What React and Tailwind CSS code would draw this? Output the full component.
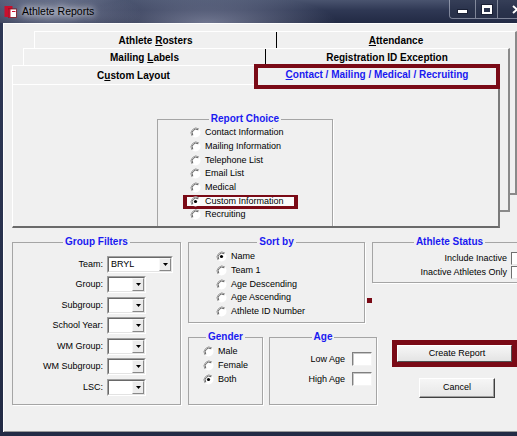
import React from 'react';

const legendCls = "mx-auto px-[2px] text-[10px] leading-[12px] font-bold text-[#1a1af0]";
const boxCls = "shrink-0 border border-[#a5a5a5] shadow-[1px_1px_0_#fff]";

function Radio({ checked }) {
  return (
    <svg width="11" height="11" viewBox="0 0 11 11" className="shrink-0">
      <circle cx="5.5" cy="5.5" r="5" fill="#fff" />
      <path d="M9 2A5 5 0 0 0 2 9" fill="none" stroke="#9a9a9a" strokeWidth="1" />
      <path d="M8.2 2.8A3.9 3.9 0 0 0 2.8 8.2" fill="none" stroke="#606060" strokeWidth="1" />
      {checked && <circle cx="5.5" cy="5.5" r="1.6" fill="#000" />}
    </svg>
  );
}

function RadioRow({ label, checked }) {
  return (
    <div className="flex h-[13.7px] items-center gap-[4px]">
      <Radio checked={checked} />
      <span className="text-[9px] leading-none text-black">{label}</span>
    </div>
  );
}

function Combo({ value, wide }) {
  return (
    <div className={`flex h-[17px] ${wide ? 'w-[66px]' : 'w-[39px]'} border border-t-[#a0a0a0] border-l-[#a0a0a0] border-r-white border-b-white`}>
      <div className="flex flex-1 border border-t-[#696969] border-l-[#696969] border-r-[#e3e3e3] border-b-[#e3e3e3] bg-white">
        <span className="flex-1 pl-[2px] text-[9px] leading-[13px] text-black">{value}</span>
        <div className="flex w-[12px] items-center justify-center border border-t-[#f8f8f8] border-l-[#f8f8f8] border-r-[#888] border-b-[#888] bg-[#ececec]">
          <svg width="5" height="3" viewBox="0 0 5 3">
            <path d="M0 0H5L2.5 3Z" fill="#000" />
          </svg>
        </div>
      </div>
    </div>
  );
}

function TextBox() {
  return (
    <div className="h-[14px] w-[20px] border border-t-[#808080] border-l-[#808080] border-r-[#f4f4f4] border-b-[#f4f4f4] bg-white shadow-[inset_1px_1px_0_#c8c8c8]" />
  );
}

function CheckBox() {
  return (
    <div className="h-[13px] w-[13px] shrink-0 border border-t-[#707070] border-l-[#707070] border-r-[#e8e8e8] border-b-[#e8e8e8] bg-white" />
  );
}

function FilterRow({ label, value, wide }) {
  return (
    <div className="flex h-[16px] items-center">
      <span className="w-[90px] text-right text-[9px] leading-none text-black">{label}</span>
      <div className="ml-[4px]">
        <Combo value={value} wide={wide} />
      </div>
    </div>
  );
}

function TitleBar() {
  return (
    <div className="flex h-[23px] items-center bg-[radial-gradient(ellipse_90px_26px_at_10%_60%,rgba(150,156,180,0.75),transparent),radial-gradient(ellipse_130px_30px_at_40%_100%,rgba(175,180,205,0.55),transparent),linear-gradient(180deg,#4a546f_0%,#2f3854_45%,#222a44_100%)]">
      <svg width="13" height="13" viewBox="0 0 13 13" className="ml-[4px] shrink-0">
        <rect x="0.5" y="1" width="8" height="11" fill="#c8102e" />
        <rect x="4.5" y="4" width="8" height="8.5" fill="#fff" stroke="#7a0a14" strokeWidth="0.8" />
        <rect x="4.5" y="4" width="2" height="8.5" fill="#c8102e" />
        <rect x="8" y="6" width="3.5" height="1" fill="#c8102e" />
      </svg>
      <span className="ml-[5px] text-[10.5px] text-black [text-shadow:0_0_6px_#fff,0_0_10px_rgba(255,255,255,0.6)]">
        Athlete Reports
      </span>
      <div className="ml-auto mr-[-22px] flex h-[19px] self-start overflow-hidden rounded-b-[4px] border border-t-0 border-[rgba(230,235,245,0.45)]">
        <div className="flex w-[26px] items-end justify-center border-r border-[rgba(230,235,245,0.45)] bg-[rgba(40,48,72,0.6)] pb-[5px]">
          <div className="h-[3px] w-[9px] bg-white shadow-[0_0_0_1px_#1a2035]" />
        </div>
        <div className="flex w-[22px] items-center justify-center border-r border-[rgba(230,235,245,0.45)] bg-[rgba(40,48,72,0.6)]">
          <div className="h-[9px] w-[10px] border-2 border-t-[3px] border-white shadow-[0_0_0_1px_#1a2035]" />
        </div>
        <div className="flex w-[40px] items-center justify-start bg-[rgba(40,48,72,0.6)] pl-[14px]">
          <svg width="10" height="9" viewBox="0 0 10 9">
            <path d="M1 1L9 8M9 1L1 8" stroke="#fff" strokeWidth="2" />
          </svg>
        </div>
      </div>
    </div>
  );
}

function Tabs() {
  return (
    <div className="h-[205px]">
      <div className="ml-[31px] pt-[8px]">
        {/* back row */}
        <div className="h-[164px] w-[483px] border-l border-t border-white border-r-2 border-b-2 border-r-[#8a8a8a] border-b-[#8a8a8a] bg-[#f0f0f0]">
          <div className="flex h-[16px] text-[10px] font-bold leading-none text-black">
            <div className="flex w-[242px] items-center justify-center border-r border-black pt-[2px]">
              <span>Athlete <u>R</u>osters</span>
            </div>
            <div className="flex flex-1 items-center justify-center pt-[2px]">
              <span><u>A</u>ttendance</span>
            </div>
          </div>
          {/* middle row */}
          <div className="ml-[-12px] h-[164px] w-[487px] border-l border-t border-white border-r-2 border-b-2 border-r-[#8a8a8a] border-b-[#8a8a8a] bg-[#f0f0f0]">
            <div className="flex h-[16px] text-[10px] font-bold leading-none text-black">
              <div className="flex w-[242px] items-center justify-center border-r border-black pt-[2px]">
                <span>Mailing <u>L</u>abels</span>
              </div>
              <div className="flex flex-1 items-center justify-center pt-[2px]">
                <span>Registration ID Exception</span>
              </div>
            </div>
            {/* front row */}
            <div className="ml-[-12px] h-[163px] w-[488px] border-l border-t border-white border-r-2 border-b-2 border-r-[#7a7a7a] border-b-[#6a6a6a] bg-[#f0f0f0]">
              <div className="flex h-[18px] text-[10px] font-bold leading-none">
                <div className="flex w-[241px] items-center justify-center pt-[1px] text-black">
                  <span>C<u>u</u>stom Layout</span>
                </div>
                <div className="relative flex-1">
                  <div className="absolute -top-[2px] -right-[2px] left-0 flex h-[25px] items-center justify-center border-4 border-[#7a0a16] bg-[#f0f0f0] pb-[3px] text-[#1a1af0]">
                    <span><u>C</u>ontact / Mailing / Medical / Recruiting</span>
                  </div>
                </div>
              </div>
              <div className="h-[142px] overflow-hidden border-t border-white">
                <fieldset className={`${boxCls} ml-[144px] mt-[28px] h-[130px] w-[176px]`}>
                  <legend className={legendCls}>Report Choice</legend>
                  <div className="flex flex-col pl-[32px] pt-[1px]">
                    <RadioRow label="Contact Information" />
                    <RadioRow label="Mailing Information" />
                    <RadioRow label="Telephone List" />
                    <RadioRow label="Email List" />
                    <RadioRow label="Medical" />
                    <div className="relative">
                      <div className="absolute left-[-7px] top-[1px] h-[14px] w-[115px] border-x-4 border-t-[2px] border-b-[3px] border-[#7a0a16] bg-[#fafafa]" />
                      <div className="relative">
                        <RadioRow label="Custom Information" checked />
                      </div>
                    </div>
                    <RadioRow label="Recruiting" />
                  </div>
                </fieldset>
              </div>
            </div>
          </div>
        </div>
      </div>
    </div>
  );
}

function Bottom() {
  return (
    <div className="ml-[9px] mt-[8px] flex items-start">
      <fieldset className={`${boxCls} h-[169px] w-[169px]`}>
        <legend className={legendCls}>Group Filters</legend>
        <div className="flex flex-col gap-[4.5px] pt-[8px]">
          <FilterRow label="Team:" value="BRYL" wide />
          <FilterRow label="Group:" />
          <FilterRow label="Subgroup:" />
          <FilterRow label="School Year:" />
          <FilterRow label="WM Group:" />
          <FilterRow label="WM Subgroup:" />
          <FilterRow label="LSC:" />
        </div>
      </fieldset>

      <div className="ml-[7px] flex shrink-0 flex-col">
        <div className="flex items-start">
          <fieldset className={`${boxCls} h-[87px] w-[177px]`}>
            <legend className={legendCls}>Sort by</legend>
            <div className="flex flex-col pl-[27px] pt-[2px]">
              <RadioRow label="Name" checked />
              <RadioRow label="Team 1" />
              <RadioRow label="Age Descending" />
              <RadioRow label="Age Ascending" />
              <RadioRow label="Athlete ID Number" />
            </div>
          </fieldset>
          <div className="w-[7px] shrink-0 pt-[62px]">
            <div className="ml-[2px] h-[5px] w-[5px] bg-[#7a0a16]" />
          </div>
          <fieldset className={`${boxCls} h-[47px] w-[155px]`}>
            <legend className={legendCls}>Athlete Status</legend>
            <div className="flex flex-col gap-[1px] pr-[2px] pt-[4px]">
              <div className="flex h-[13px] items-center justify-end gap-[4px]">
                <span className="text-[9px] leading-none text-black">Include Inactive</span>
                <CheckBox />
              </div>
              <div className="flex h-[13px] items-center justify-end gap-[4px]">
                <span className="text-[9px] leading-none text-black">Inactive Athletes Only</span>
                <CheckBox />
              </div>
            </div>
          </fieldset>
        </div>

        <div className="mt-[8px] flex items-start">
          <fieldset className={`${boxCls} h-[74px] w-[75px]`}>
            <legend className={legendCls}>Gender</legend>
            <div className="flex flex-col pl-[14px] pt-[2px]">
              <RadioRow label="Male" />
              <RadioRow label="Female" />
              <RadioRow label="Both" checked />
            </div>
          </fieldset>
          <fieldset className={`${boxCls} ml-[6px] h-[74px] w-[108px]`}>
            <legend className={legendCls}>Age</legend>
            <div className="flex flex-col gap-[6px] pr-[4px] pt-[9px]">
              <div className="flex items-center justify-end gap-[7px]">
                <span className="text-[9px] leading-none text-black">Low Age</span>
                <TextBox />
              </div>
              <div className="flex items-center justify-end gap-[7px]">
                <span className="text-[9px] leading-none text-black">High Age</span>
                <TextBox />
              </div>
            </div>
          </fieldset>
          <div className="ml-[15px] flex shrink-0 flex-col pt-[9px]">
            <div className="h-[27px] w-[125px] border-[5px] border-[#7a0a16]">
              <div className="flex h-full items-center justify-center border border-t-white border-l-white border-r-[#505050] border-b-[#505050] bg-[linear-gradient(180deg,#f6f6f6,#e4e4e4)] pl-[5px] text-[9px] text-black">
                Create Report
              </div>
            </div>
            <div className="ml-[27px] mt-[11px] flex h-[20px] w-[76px] items-center justify-center border border-t-white border-l-white border-r-[#404040] border-b-[#404040] bg-[linear-gradient(180deg,#f6f6f6,#e6e6e6)] text-[9px] text-black shadow-[inset_-1px_-1px_0_#a0a0a0]">
              Cancel
            </div>
          </div>
        </div>
      </div>
    </div>
  );
}

export default function App() {
  return (
    <div className="h-[436px] w-[517px] overflow-hidden bg-[linear-gradient(180deg,#2e3856,#232b45)] font-['Liberation_Sans',Arial,sans-serif]">
      <TitleBar />
      <div className="ml-[3px] h-[409px] overflow-hidden bg-[#f0f0f0] shadow-[inset_1px_1px_0_#fdfdfd,inset_0_-1px_0_#9a9a9a]">
        <Tabs />
        <Bottom />
      </div>
    </div>
  );
}
